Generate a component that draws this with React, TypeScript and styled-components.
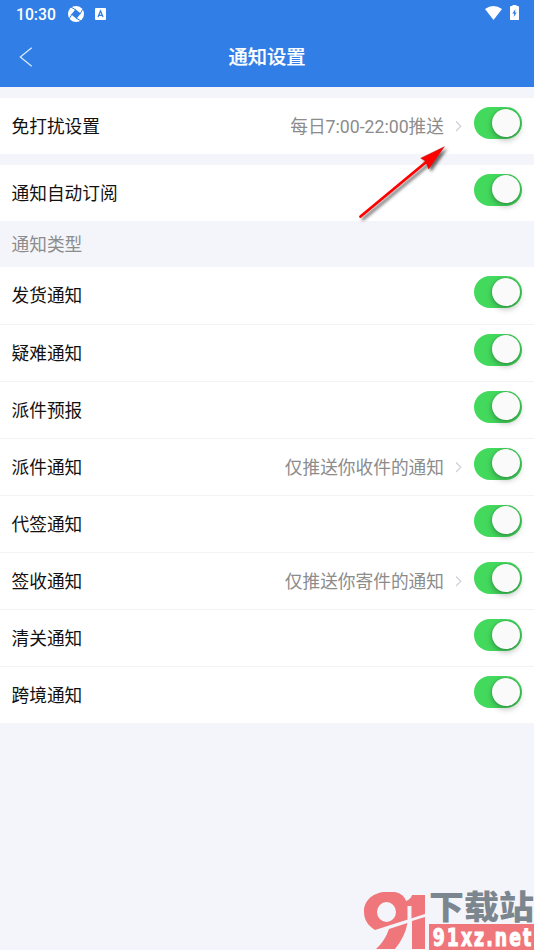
import React from 'react';
import styled, { createGlobalStyle } from 'styled-components';

const GlobalStyle = createGlobalStyle`
  * { box-sizing: border-box; }
  body { margin: 0; background: #f4f5fa; }
`;

const Screen = styled.main`
  position: relative;
  width: 534px;
  height: 950px;
  overflow: hidden;
  background: #f4f5fa;
  font-family: Roboto, 'Noto Sans CJK SC', sans-serif;
  color: #111;
`;

const Header = styled.header`
  height: 87px;
  background: #307ee6;
  color: #fff;
`;

const StatusBar = styled.div`
  height: 27px;
  display: flex;
  align-items: center;
  padding: 0 15px 0 16px;
  font-size: 15.7px;
  font-weight: 500;
`;

const Clock = styled.span`
  width: 52px;
  padding-top: 1px;
  line-height: 27px;
  white-space: nowrap;
`;

const StatusIcons = styled.div<{ $end?: boolean }>`
  display: flex;
  align-items: center;
  gap: ${(p) => (p.$end ? 8 : 11)}px;
  margin-left: ${(p) => (p.$end ? 'auto' : '0')};
  margin-top: ${(p) => (p.$end ? '-2px' : '0')};
`;

const NavBar = styled.nav`
  height: 60px;
  display: grid;
  grid-template-columns: 52px 1fr 52px;
  align-items: center;
`;

const BackButton = styled.button`
  border: 0;
  padding: 0 0 0 19px;
  background: none;
  display: flex;
`;

const Title = styled.h1`
  margin: 0;
  padding-top: 2px;
  text-align: center;
  font-size: 19.3px;
  line-height: 28px;
  font-weight: 500;
  -webkit-text-stroke: 0.2px #fff;
`;

const Group = styled.section<{ $gap?: number }>`
  margin-top: ${(p) => p.$gap ?? 0}px;
  background: #fff;
`;

const Row = styled.div<{ $height: number; $divided?: boolean }>`
  height: ${(p) => p.$height}px;
  display: flex;
  align-items: center;
  padding: 0 12px 0 11.5px;
  border-top: ${(p) => (p.$divided ? '1px solid #f3f3f5' : '0')};
`;

const Label = styled.span`
  flex: 1;
  padding-top: 2px;
  font-size: 17.7px;
  line-height: 26px;
`;

const Value = styled.span`
  display: flex;
  align-items: center;
  gap: 11px;
  margin-right: 12px;
  font-size: 17.7px;
  line-height: 26px;
  color: #8c8c8c;
`;

const ValueText = styled.span`
  padding-top: 2px;
`;

const SectionTitle = styled.h2`
  margin: 0;
  height: 46.4px;
  padding: 1px 11.5px 0;
  font-size: 17.7px;
  font-weight: 400;
  line-height: 46px;
  color: #8c8c8c;
`;

const Switch = styled.button`
  width: 48px;
  height: 32px;
  margin-bottom: 6px;
  padding: 0 2px 1px 0;
  display: flex;
  align-items: center;
  justify-content: flex-end;
  border: 0;
  border-radius: 16px;
  background: #43d95d;
`;

const Knob = styled.span`
  width: 28px;
  height: 28px;
  border-radius: 50%;
  background: #fafafa;
  box-shadow: 0 3px 6px rgba(0, 0, 0, 0.28), 0 0 2px rgba(0, 0, 0, 0.25);
`;

const ArrowMark = styled.svg`
  position: absolute;
  left: 350px;
  top: 136px;
`;

const Watermark = styled.div`
  position: absolute;
  right: 0;
  bottom: 0;
  width: 172px;
  height: 60px;
  display: flex;
`;

const Brand = styled.div`
  flex: 1;
  display: flex;
  flex-direction: column;
  margin-left: 3px;
`;

const BrandName = styled.div`
  height: 34px;
  font: 900 35px/34px 'Noto Sans CJK SC', sans-serif;
  color: #7b868f;
  white-space: nowrap;
  transform: translateY(-2px) scaleY(0.95);
`;

const BrandSite = styled.div`
  height: 26px;
  padding-left: 3px;
  background: #ef767a;
`;

const rows: { label: string; value?: string }[] = [
  { label: '发货通知' },
  { label: '疑难通知' },
  { label: '派件预报' },
  { label: '派件通知', value: '仅推送你收件的通知' },
  { label: '代签通知' },
  { label: '签收通知', value: '仅推送你寄件的通知' },
  { label: '清关通知' },
  { label: '跨境通知' },
];

function SettingRow(props: { label: string; value?: string; height: number; divided?: boolean }) {
  return (
    <Row $height={props.height} $divided={props.divided}>
      <Label>{props.label}</Label>
      {props.value && (
        <Value>
          <ValueText>{props.value}</ValueText>
          <svg width="7" height="12" viewBox="0 0 7 12" fill="none" stroke="#cdd0d6" strokeWidth="1.2">
            <path d="M1 1.5 5.8 6.3 1 11" />
          </svg>
        </Value>
      )}
      <Switch role="switch" aria-checked="true" aria-label={props.label}>
        <Knob />
      </Switch>
    </Row>
  );
}

export default function App() {
  return (
    <Screen>
      <GlobalStyle />
      <Header>
        <StatusBar>
          <Clock>10:30</Clock>
          <StatusIcons>
            <svg width="16" height="16" viewBox="0 0 16 16">
              <circle cx="8" cy="8" r="8" fill="#fff" />
              <path d="M7.5 3.3 12.7 7.5 8.5 12.7 3.3 8.5Z" fill="#307ee6" />
              <path d="M8 4 3.2 1.2M12 8 14.8 3.2M8 12 12.8 14.8M4 8 1.2 12.8" stroke="#307ee6" strokeWidth="1" />
            </svg>
            <svg width="11" height="12" viewBox="0 0 11 12">
              <rect width="11" height="12" rx="1" fill="#fff" />
              <path d="M3 9 5.5 3 8 9M3.8 7.3h3.4" fill="none" stroke="#307ee6" strokeWidth="1.3" />
            </svg>
          </StatusIcons>
          <StatusIcons $end>
            <svg width="17" height="14" viewBox="0 0 17 14">
              <path d="M0 3Q8.5-3 17 3L8.5 14Z" fill="#fff" />
            </svg>
            <svg width="9" height="15" viewBox="0 0 9 15">
              <path d="M2.5 1V0h4v1H8q1 0 1 1v13H0V2q0-1 1-1Z" fill="#fff" />
              <path d="M5.5 4 2.3 8.6h1.9L3.7 12l3-4.6H5Z" fill="#307ee6" />
            </svg>
          </StatusIcons>
        </StatusBar>
        <NavBar>
          <BackButton aria-label="返回">
            <svg width="14" height="20" viewBox="0 0 14 20" fill="none" stroke="#fff" strokeOpacity=".85" strokeWidth="1.2">
              <path d="M12.7.8 1.3 10l11.4 9.2" />
            </svg>
          </BackButton>
          <Title>通知设置</Title>
        </NavBar>
      </Header>

      <Group $gap={11}>
        <SettingRow label="免打扰设置" value="每日7:00-22:00推送" height={56} />
      </Group>
      <Group $gap={11}>
        <SettingRow label="通知自动订阅" height={55.6} />
      </Group>
      <SectionTitle>通知类型</SectionTitle>
      <Group>
        {rows.map((r, i) => (
          <SettingRow key={r.label} label={r.label} value={r.value} height={i ? 57.1 : 56.6} divided={i > 0} />
        ))}
      </Group>

      <ArrowMark width="110" height="90" viewBox="0 0 110 90">
        <defs>
          <filter id="shade" x="-20%" y="-20%" width="150%" height="150%">
            <feDropShadow dx="2.5" dy="2.5" stdDeviation="1.8" floodOpacity="0.6" />
          </filter>
        </defs>
        <g filter="url(#shade)" fill="#f00">
          <path d="M10.5 80.5 78 24.5" stroke="#f00" strokeWidth="2.8" strokeLinecap="round" />
          <path d="M94.3 10.7 70.7 22.2 75.7 25 78.6 33Z" stroke="#c01010" strokeWidth=".5" />
          <path d="M74.5 25 77 28 80 25.5 77.5 22.5Z" />
        </g>
      </ArrowMark>

      <Watermark>
        <svg width="64" height="60" viewBox="0 0 64 60">
          <path
            fill="#ef767a"
            fillRule="evenodd"
            d="M24 2H33Q42 4 44 11Q49 9 50 5H63V24L13 40C5 35 2 29 2 21 2 10 12 2 24 2ZM24.5 12A9.5 10 0 1 0 24.5 32 9.5 10 0 1 0 24.5 12ZM45.5 16V29.5L49.5 28.5V16Z"
          />
          <path fill="#ef767a" d="M50 31 63 27V59H50ZM45.5 33Q43 47 33 59H14Q23 51 27 39Z" />
        </svg>
        <Brand>
          <BrandName>下载站</BrandName>
          <BrandSite>
            <svg width="102" height="26" viewBox="0 0 102 26">
              <g transform="scale(.8 1)">
                <text x="1" y="21.5" textLength="123" lengthAdjust="spacing" fill="#fff" stroke="#fff" strokeWidth="1" fontFamily="DejaVu Sans Condensed, DejaVu Sans, sans-serif" fontStretch="condensed" fontWeight="700" fontSize="24">
                  91xz.net
                </text>
              </g>
            </svg>
          </BrandSite>
        </Brand>
      </Watermark>
    </Screen>
  );
}
